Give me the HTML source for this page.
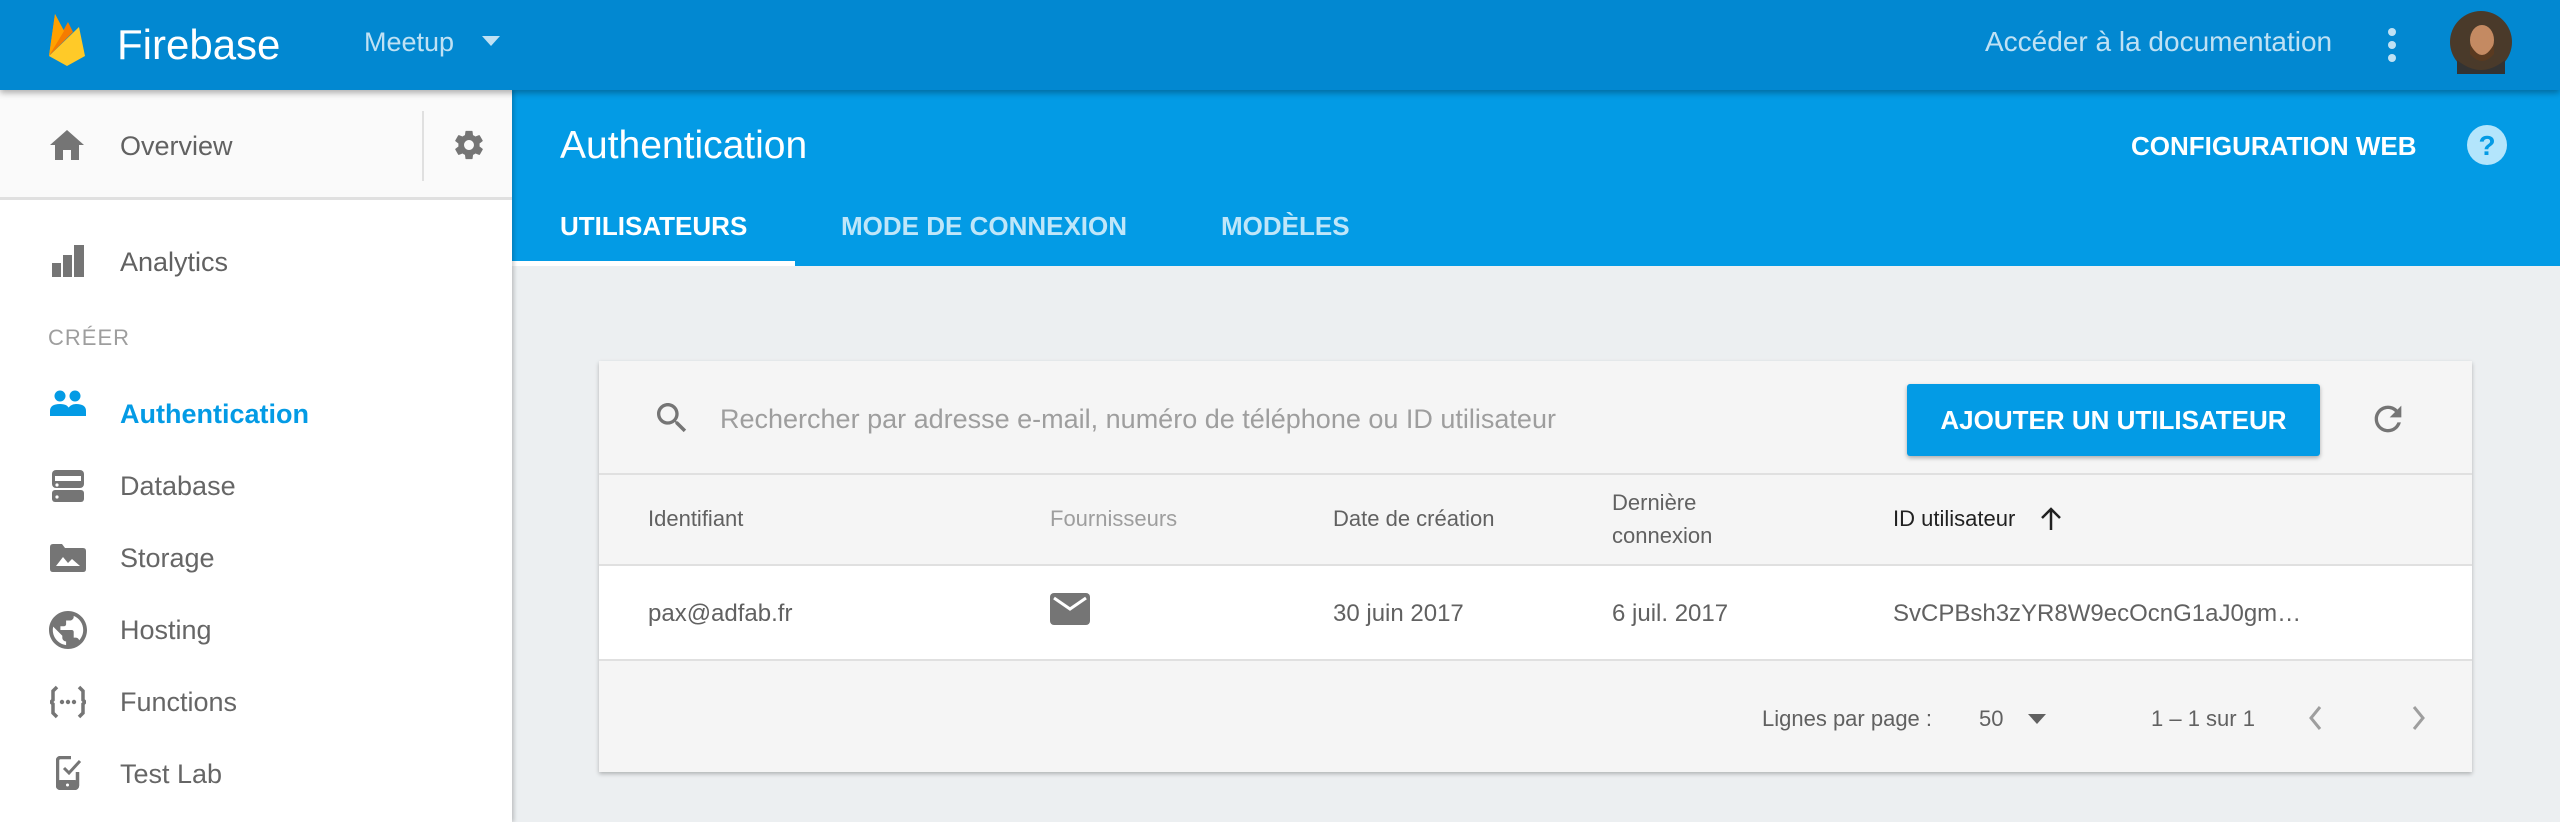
<!DOCTYPE html>
<html><head><meta charset="utf-8"><style>
*{margin:0;padding:0;box-sizing:border-box}
body{width:2560px;height:822px;overflow:hidden;background:#eceff1;font-family:"Liberation Sans",Arial,sans-serif;position:relative}
.a{position:absolute;white-space:nowrap}
.t{position:absolute;white-space:nowrap;height:40px;line-height:40px}
svg{position:absolute}
</style></head><body>
<div class="a" style="left:512px;top:90px;width:2048px;height:176px;background:#039be5"></div>
<div class="a" style="left:0;top:0;width:2560px;height:90px;background:#0288d1;box-shadow:0 3px 6px rgba(0,0,0,.3);z-index:3"></div>
<div style="position:absolute;left:0;top:0;width:2560px;height:90px;z-index:4">
<svg style="left:48px;top:12px" width="38" height="54" viewBox="0 0 38 54">
<path d="M1 44 L7 2 L16 19 Z" fill="#ffa000"/>
<path d="M1 44 L20 10 L25 20 Z" fill="#f57c00"/>
<path d="M1 44 L31 15 L37 44 L19 54 Z" fill="#ffca28"/>
<path d="M1 44 L16 19 L7 2 Z" fill="#ffa000"/>
</svg>
<div class="t" style="left:117px;top:20px;height:50px;line-height:50px;font-size:42px;color:#fff">Firebase</div>
<div class="t" style="left:364px;top:22px;font-size:27px;color:rgba(255,255,255,.75)">Meetup</div>
<svg style="left:482px;top:36px" width="18" height="10"><path d="M0 0H18L9 10Z" fill="rgba(255,255,255,.75)"/></svg>
<div class="t" style="left:1985px;top:22px;font-size:28px;color:rgba(255,255,255,.75)">Accéder à la documentation</div>
<svg style="left:2384px;top:26px" width="16" height="38"><circle cx="8" cy="6" r="4" fill="rgba(255,255,255,.75)"/><circle cx="8" cy="19" r="4" fill="rgba(255,255,255,.75)"/><circle cx="8" cy="32" r="4" fill="rgba(255,255,255,.75)"/></svg>
<svg style="left:2449px;top:10px" width="64" height="64"><circle cx="32" cy="32" r="31" fill="#4a3a2a"/><ellipse cx="33" cy="30" rx="12" ry="15" fill="#c48a62"/><path d="M21 34 Q33 56 45 34 L45 44 Q33 58 21 44Z" fill="#5a3a20"/><path d="M8 50 Q32 70 56 50 L56 64 L8 64Z" fill="#333"/></svg>
</div>
<div class="a" style="left:0;top:90px;width:512px;height:732px;background:#fff;box-shadow:2px 0 4px rgba(0,0,0,.2);z-index:2">
<div class="a" style="left:0;top:0;width:512px;height:110px;background:#fafafa;border-bottom:3px solid #e0e0e0"></div>
<div class="a" style="left:422px;top:21px;width:2px;height:70px;background:#e0e0e0"></div>
</div>
<div style="position:absolute;left:0;top:90px;width:512px;height:732px;z-index:3;color:#666;font-size:27px">
<svg style="left:50px;top:40px" width="34" height="30" viewBox="0 0 34 30"><path d="M17 0 L34 15 H29 V30 H21 V20 H13 V30 H5 V15 H0Z" fill="#757575"/></svg>
<div class="t" style="left:120px;top:36px;color:#616161">Overview</div>
<svg style="left:452px;top:38px" width="34" height="34" viewBox="0 0 24 24"><path fill="#757575" d="M19.4 13c.04-.32.1-.66.1-1s-.06-.68-.1-1l2.1-1.65c.2-.15.25-.42.13-.64l-2-3.460c-.12-.22-.4-.3-.6-.22l-2.5 1c-.52-.4-1.08-.73-1.7-.98L14.5 2.4c-.03-.24-.24-.4-.5-.4h-4c-.25 0-.46.16-.5.4l-.37 2.65c-.62.25-1.18.58-1.7.98l-2.5-1c-.22-.08-.48 0-.6.22l-2 3.46c-.13.22-.07.5.12.64L4.57 11c-.04.32-.07.66-.07 1s.03.68.07 1l-2.1 1.65c-.2.15-.25.42-.13.64l2 3.46c.12.22.4.3.6.22l2.5-1c.52.4 1.08.73 1.7.98l.37 2.65c.04.24.25.4.5.4h4c.25 0 .46-.16.5-.4l.37-2.65c.62-.25 1.18-.58 1.7-.98l2.5 1c.22.08.48 0 .6-.22l2-3.46c.12-.22.07-.5-.12-.64L19.4 13zM12 15.5c-1.930 0-3.5-1.57-3.5-3.5s1.57-3.5 3.5-3.5 3.5 1.57 3.5 3.5-1.57 3.5-3.5 3.5z"/></svg>
<svg style="left:52px;top:155px" width="32" height="32"><rect x="0" y="18" width="9" height="14" fill="#757575"/><rect x="11" y="10" width="9" height="22" fill="#757575"/><rect x="22" y="0" width="10" height="32" fill="#757575"/></svg>
<div class="t" style="left:120px;top:152px;color:#616161">Analytics</div>
<div class="t" style="left:48px;top:228px;font-size:22px;color:#9e9e9e;letter-spacing:1px">CRÉER</div>
<svg style="left:50px;top:300px" width="36" height="26" viewBox="0 0 36 26"><circle cx="10" cy="6" r="5.5" fill="#039be5"/><circle cx="25" cy="6" r="5.5" fill="#039be5"/><path d="M0 26 V21 Q0 14 10 14 Q18 14 19 19 V26Z M17 26 V20 Q20 14 26 14 Q36 14 36 21 V26Z" fill="#039be5"/></svg>
<div class="t" style="left:120px;top:304px;color:#039be5;font-weight:bold">Authentication</div>
<svg style="left:52px;top:380px" width="32" height="32"><rect x="0" y="0" width="32" height="18" rx="4" fill="#757575"/><rect x="0" y="20" width="32" height="12" rx="3" fill="#757575"/><rect x="3" y="6" width="26" height="5" fill="#fff"/><circle cx="5" cy="15" r="1.6" fill="#fff"/><circle cx="5" cy="27" r="1.6" fill="#fff"/></svg>
<div class="t" style="left:120px;top:376px">Database</div>
<svg style="left:50px;top:454px" width="36" height="28"><path d="M0 3 Q0 0 3 0 H12 L15 4 H33 Q36 4 36 7 V25 Q36 28 33 28 H3 Q0 28 0 25Z" fill="#757575"/><path d="M6 22 L13 13 L18 19 L22 15 L30 22Z" fill="#fff"/></svg>
<div class="t" style="left:120px;top:448px">Storage</div>
<svg style="left:49px;top:521px" width="38" height="38" viewBox="2 2 20 20"><path fill="#757575" d="M12 2C6.48 2 2 6.48 2 12s4.48 10 10 10 10-4.48 10-10S17.52 2 12 2zm-1 17.93c-3.95-.49-7-3.85-7-7.93 0-.62.08-1.21.21-1.79L9 15v1c0 1.1.9 2 2 2v1.930zm6.9-2.54c-.26-.81-1-1.39-1.9-1.39h-1v-3c0-.55-.45-1-1-1H8v-2h2c.55 0 1-.45 1-1V7h2c1.1 0 2-.9 2-2v-.41c2.93 1.19 5 4.060 5 7.41 0 2.08-.8 3.97-2.1 5.39z"/></svg>
<div class="t" style="left:120px;top:520px">Hosting</div>
<svg style="left:50px;top:595px" width="36" height="34"><path d="M7 2 L3 6 V15 L1 17 L3 19 V28 L7 32" fill="none" stroke="#757575" stroke-width="3.5"/><path d="M29 2 L33 6 V15 L35 17 L33 19 V28 L29 32" fill="none" stroke="#757575" stroke-width="3.5"/><circle cx="12" cy="17" r="2.2" fill="#757575"/><circle cx="18" cy="17" r="2.2" fill="#757575"/><circle cx="24" cy="17" r="2.2" fill="#757575"/></svg>
<div class="t" style="left:120px;top:592px">Functions</div>
<svg style="left:56px;top:666px" width="26" height="34"><rect x="1.5" y="1.5" width="20" height="31" rx="3" fill="none" stroke="#757575" stroke-width="3.5"/><rect x="1" y="24" width="21" height="9" rx="3" fill="#757575"/><circle cx="11.5" cy="29" r="1.5" fill="#fff"/><rect x="15" y="0" width="11" height="16" fill="#fff"/><path d="M8 12 L13 17 L24 5" fill="none" stroke="#757575" stroke-width="3"/></svg>
<div class="t" style="left:120px;top:664px">Test Lab</div>
</div>
<div class="t" style="left:560px;top:121px;height:50px;line-height:50px;font-size:39px;color:#fff">Authentication</div>
<div class="t" style="left:2131px;top:126px;font-size:26px;color:#fff;font-weight:bold">CONFIGURATION WEB</div>
<svg style="left:2466px;top:124px" width="42" height="42"><circle cx="21" cy="21" r="20" fill="#b3e5fc"/><text x="21" y="31" text-anchor="middle" font-family="Liberation Sans" font-weight="bold" font-size="28" fill="#039be5">?</text></svg>
<div class="t" style="left:560px;top:206px;font-size:26px;color:#fff;font-weight:bold">UTILISATEURS</div>
<div class="t" style="left:841px;top:206px;font-size:26px;color:rgba(255,255,255,.75);font-weight:bold">MODE DE CONNEXION</div>
<div class="t" style="left:1221px;top:206px;font-size:26px;color:rgba(255,255,255,.75);font-weight:bold">MODÈLES</div>
<div class="a" style="left:512px;top:261px;width:283px;height:5px;background:#fff"></div>
<div class="a" style="left:599px;top:361px;width:1873px;height:411px;background:#f5f5f5;box-shadow:0 2px 4px rgba(0,0,0,.25)"></div>
<svg style="left:652px;top:398px" width="40" height="40" viewBox="0 0 24 24"><path fill="#757575" d="M15.5 14h-.79l-.28-.27C15.41 12.59 16 11.11 16 9.5 16 5.91 13.09 3 9.5 3S3 5.91 3 9.5 5.91 16 9.5 16c1.61 0 3.09-.59 4.23-1.57l.27.28v.79l5 4.99L20.49 19l-4.99-5zm-6 0C7.01 14 5 11.99 5 9.5S7.01 5 9.5 5 14 7.01 14 9.5 11.99 14 9.5 14z"/></svg>
<div class="t" style="left:720px;top:399px;font-size:27px;color:#9e9e9e">Rechercher par adresse e-mail, numéro de téléphone ou ID utilisateur</div>
<div class="a" style="left:1907px;top:384px;width:413px;height:72px;background:#039be5;border-radius:3px;box-shadow:0 2px 4px rgba(0,0,0,.3);color:#fff;font-size:26px;font-weight:bold;text-align:center;line-height:72px">AJOUTER UN UTILISATEUR</div>
<svg style="left:2368px;top:399px" width="40" height="40" viewBox="0 0 24 24"><path fill="#757575" d="M17.65 6.35C16.2 4.9 14.21 4 12 4c-4.42 0-7.99 3.58-7.99 8s3.57 8 7.99 8c3.73 0 6.84-2.55 7.73-6h-2.08c-.82 2.33-3.04 4-5.65 4-3.31 0-6-2.69-6-6s2.69-6 6-6c1.66 0 3.14.69 4.22 1.78L13 11h7V4l-2.35 2.35z"/></svg>
<div class="a" style="left:599px;top:473px;width:1873px;height:2px;background:#e0e0e0"></div>
<div class="t" style="left:648px;top:499px;font-size:22px;color:#616161">Identifiant</div>
<div class="t" style="left:1050px;top:499px;font-size:22px;color:#9e9e9e">Fournisseurs</div>
<div class="t" style="left:1333px;top:499px;font-size:22px;color:#616161">Date de création</div>
<div class="a" style="left:1612px;top:486px;font-size:22px;color:#616161;line-height:33px">Dernière<br>connexion</div>
<div class="t" style="left:1893px;top:499px;font-size:22px;color:#212121">ID utilisateur</div>
<svg style="left:2040px;top:507px" width="22" height="24"><path d="M11 2 V23 M2 11 L11 2 L20 11" fill="none" stroke="#212121" stroke-width="2.5"/></svg>
<div class="a" style="left:599px;top:564px;width:1873px;height:97px;background:#fff;border-top:2px solid #e0e0e0;border-bottom:2px solid #e0e0e0"></div>
<div class="t" style="left:648px;top:594px;font-size:24px;color:#616161">pax@adfab.fr</div>
<svg style="left:1050px;top:593px" width="40" height="32" viewBox="0 0 40 32"><rect x="0" y="0" width="40" height="32" rx="4" fill="#757575"/><path d="M4 5 L20 16 L36 5" fill="none" stroke="#fff" stroke-width="3"/></svg>
<div class="t" style="left:1333px;top:594px;font-size:24px;color:#616161">30 juin 2017</div>
<div class="t" style="left:1612px;top:594px;font-size:24px;color:#616161">6 juil. 2017</div>
<div class="t" style="left:1893px;top:594px;font-size:24px;color:#616161">SvCPBsh3zYR8W9ecOcnG1aJ0gm…</div>
<div class="t" style="left:1762px;top:699px;font-size:22px;color:#616161">Lignes par page :</div>
<div class="t" style="left:1979px;top:699px;font-size:22px;color:#616161">50</div>
<svg style="left:2028px;top:714px" width="18" height="10"><path d="M0 0H18L9 10Z" fill="#616161"/></svg>
<div class="t" style="left:2151px;top:699px;font-size:22px;color:#616161">1 – 1 sur 1</div>
<svg style="left:2307px;top:704px" width="16" height="28"><path d="M13 3 L4 14 L13 25" fill="none" stroke="#9e9e9e" stroke-width="3"/></svg>
<svg style="left:2411px;top:704px" width="16" height="28"><path d="M3 3 L12 14 L3 25" fill="none" stroke="#9e9e9e" stroke-width="3"/></svg>
</body></html>
